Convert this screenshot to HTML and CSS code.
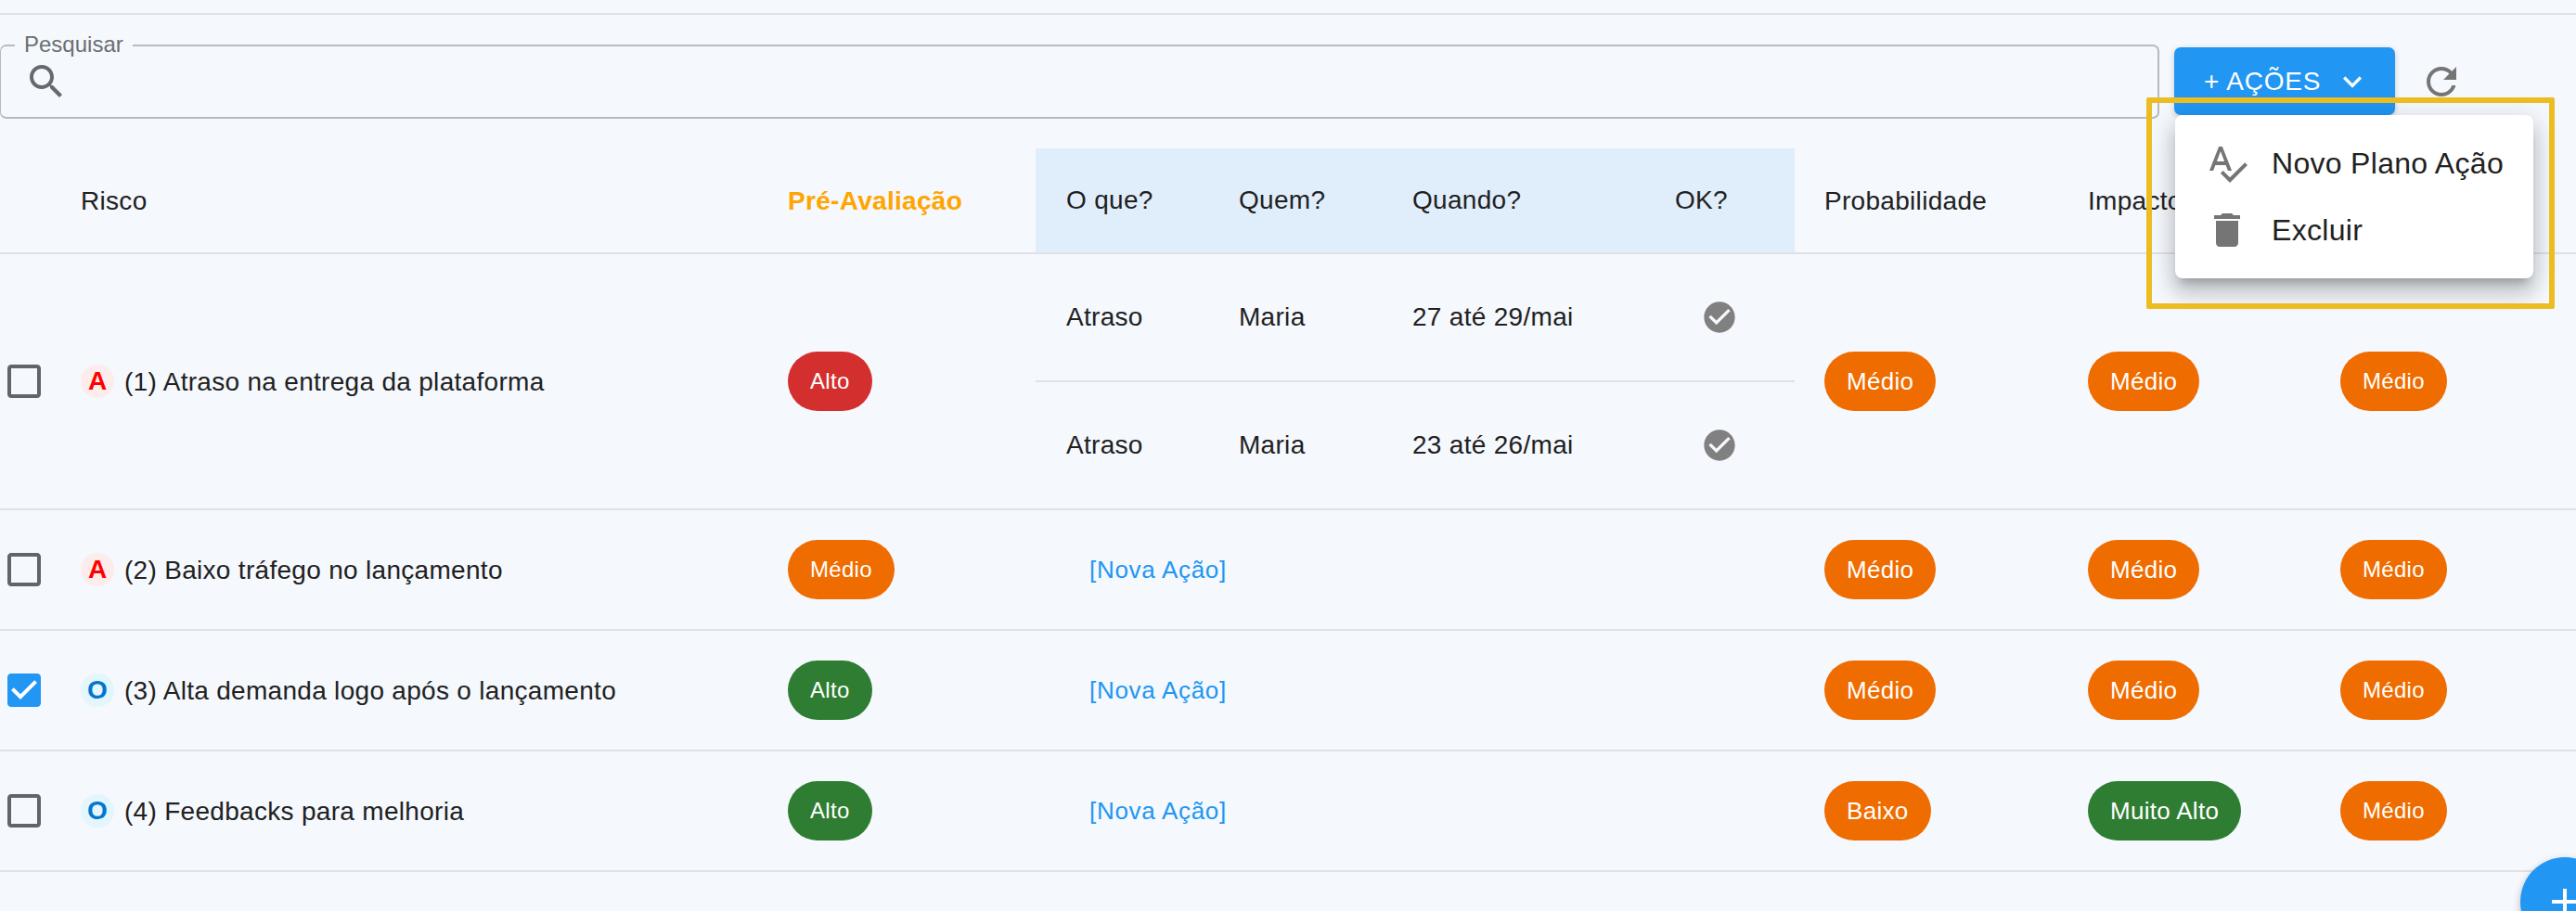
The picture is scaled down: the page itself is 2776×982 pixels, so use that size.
FILE: index.html
```html
<!DOCTYPE html>
<html lang="pt-BR">
<head>
    <meta charset="UTF-8">
    <title>Riscos</title>
    <link rel="stylesheet" href="styles.css">
</head>
<body>
    <div class="divider"></div>

    <div class="toolbar">
        <div class="search-box">
            <span class="search-label">Pesquisar</span>
            <svg class="icon icon-grey" viewBox="0 0 24 24"><path d="M15.5 14h-.79l-.28-.27C15.41 12.59 16 11.11 16 9.5 16 5.91 13.09 3 9.5 3S3 5.91 3 9.5 5.91 16 9.5 16c1.61 0 3.09-.59 4.23-1.57l.27.28v.79l5 4.99L20.49 19l-4.99-5zm-6 0C7.01 14 5 11.99 5 9.5S7.01 5 9.5 5 14 7.01 14 9.5 11.99 14 9.5 14z"/></svg>
        </div>
        <button class="actions-btn">
            <span>+ AÇÕES</span>
            <svg class="chevron" viewBox="0 0 24 24"><path d="M7.41 8.59L12 13.17l4.59-4.58L18 10l-6 6-6-6 1.41-1.41z"/></svg>
        </button>
        <svg class="icon icon-refresh" viewBox="0 0 24 24"><path d="M17.65 6.35C16.2 4.9 14.21 4 12 4c-4.42 0-7.99 3.58-7.99 8s3.57 8 7.99 8c3.73 0 6.84-2.55 7.73-6h-2.08c-.82 2.33-3.04 4-5.65 4-3.31 0-6-2.69-6-6s2.69-6 6-6c1.66 0 3.14.69 4.22 1.78L13 11h7V4l-2.35 2.35z"/></svg>
    </div>

    <div class="table">
        <div class="row head-row">
            <div></div>
            <div class="cell">Risco</div>
            <div class="cell pre-title">Pré-Avaliação</div>
            <div class="actions-head">
                <div>O que?</div>
                <div>Quem?</div>
                <div>Quando?</div>
                <div>OK?</div>
            </div>
            <div class="cell prob">Probabilidade</div>
            <div class="cell">Impacto</div>
            <div></div>
        </div>

        <div class="row row-tall">
            <div class="check-cell">
                <svg class="icon icon-box" viewBox="0 0 24 24"><path d="M19 5v14H5V5h14m0-2H5c-1.1 0-2 .9-2 2v14c0 1.1.9 2 2 2h14c1.1 0 2-.9 2-2V5c0-1.1-.9-2-2-2z"/></svg>
            </div>
            <div class="cell risk"><span class="avatar threat">A</span>(1) Atraso na entrega da plataforma</div>
            <div class="cell"><span class="pill small red">Alto</span></div>
            <div class="action-list">
                <div class="action">
                    <div>Atraso</div>
                    <div>Maria</div>
                    <div>27 até 29/mai</div>
                    <svg class="icon-ok" viewBox="0 0 24 24"><path d="M12 2C6.48 2 2 6.48 2 12s4.48 10 10 10 10-4.48 10-10S17.52 2 12 2zm-2 15l-5-5 1.41-1.41L10 14.17l7.59-7.59L19 8l-9 9z"/></svg>
                </div>
                <div class="action">
                    <div>Atraso</div>
                    <div>Maria</div>
                    <div>23 até 26/mai</div>
                    <svg class="icon-ok" viewBox="0 0 24 24"><path d="M12 2C6.48 2 2 6.48 2 12s4.48 10 10 10 10-4.48 10-10S17.52 2 12 2zm-2 15l-5-5 1.41-1.41L10 14.17l7.59-7.59L19 8l-9 9z"/></svg>
                </div>
            </div>
            <div class="cell prob"><span class="pill orange">Médio</span></div>
            <div class="cell"><span class="pill orange">Médio</span></div>
            <div class="cell"><span class="pill small orange">Médio</span></div>
        </div>

        <div class="row">
            <div class="check-cell">
                <svg class="icon icon-box" viewBox="0 0 24 24"><path d="M19 5v14H5V5h14m0-2H5c-1.1 0-2 .9-2 2v14c0 1.1.9 2 2 2h14c1.1 0 2-.9 2-2V5c0-1.1-.9-2-2-2z"/></svg>
            </div>
            <div class="cell risk"><span class="avatar threat">A</span>(2) Baixo tráfego no lançamento</div>
            <div class="cell"><span class="pill small orange">Médio</span></div>
            <div class="cell new-action">[Nova Ação]</div>
            <div class="cell prob"><span class="pill orange">Médio</span></div>
            <div class="cell"><span class="pill orange">Médio</span></div>
            <div class="cell"><span class="pill small orange">Médio</span></div>
        </div>

        <div class="row">
            <div class="check-cell">
                <svg class="icon icon-checked" viewBox="0 0 24 24"><path d="M5 4h14v16H5z" fill="#fff"/><path d="M19 3H5c-1.11 0-2 .9-2 2v14c0 1.1.89 2 2 2h14c1.1 0 2-.9 2-2V5c0-1.1-.9-2-2-2zm-9 14l-5-5 1.41-1.41L10 14.17l7.59-7.59L19 8l-9 9z"/></svg>
            </div>
            <div class="cell risk"><span class="avatar chance">O</span>(3) Alta demanda logo após o lançamento</div>
            <div class="cell"><span class="pill small green">Alto</span></div>
            <div class="cell new-action">[Nova Ação]</div>
            <div class="cell prob"><span class="pill orange">Médio</span></div>
            <div class="cell"><span class="pill orange">Médio</span></div>
            <div class="cell"><span class="pill small orange">Médio</span></div>
        </div>

        <div class="row">
            <div class="check-cell">
                <svg class="icon icon-box" viewBox="0 0 24 24"><path d="M19 5v14H5V5h14m0-2H5c-1.1 0-2 .9-2 2v14c0 1.1.9 2 2 2h14c1.1 0 2-.9 2-2V5c0-1.1-.9-2-2-2z"/></svg>
            </div>
            <div class="cell risk"><span class="avatar chance">O</span>(4) Feedbacks para melhoria</div>
            <div class="cell"><span class="pill small green">Alto</span></div>
            <div class="cell new-action">[Nova Ação]</div>
            <div class="cell prob"><span class="pill orange">Baixo</span></div>
            <div class="cell"><span class="pill green">Muito Alto</span></div>
            <div class="cell"><span class="pill small orange">Médio</span></div>
        </div>
    </div>

    <!-- menu aberto pelo botao + ACOES -->
    <div class="menu">
        <div class="menu-item">
            <svg class="icon icon-menu" viewBox="0 0 24 24"><path d="M12.45 16h2.09L9.43 3H7.57L2.46 16h2.09l1.12-3h5.64l1.14 3zm-6.02-5L8.5 5.48 10.57 11H6.43zm15.16.59l-8.09 8.09L9.83 16l-1.41 1.41 5.09 5.09L23 13l-1.41-1.41z"/></svg>
            <span>Novo Plano Ação</span>
        </div>
        <div class="menu-item">
            <svg class="icon icon-menu" viewBox="0 0 24 24"><path d="M6 19c0 1.1.9 2 2 2h8c1.1 0 2-.9 2-2V7H6v12zM19 4h-3.5l-1-1h-5l-1 1H5v2h14V4z"/></svg>
            <span>Excluir</span>
        </div>
    </div>
    <div class="highlight"></div>

    <div class="fab">
        <svg class="icon" viewBox="0 0 24 24"><path d="M19 13h-6v6h-2v-6H5v-2h6V5h2v6h6v2z" fill="#fff"/></svg>
    </div>
</body>
</html>
```

FILE: styles.css
```css
html, body {
    height: 982px;
    overflow: hidden;
}
body {
    font-family: 'Liberation Sans', Arial, sans-serif;
    font-size: 28px;
    letter-spacing: .01071em;
    color: #212121;
    background: #f5f8fd;
    margin: 0;
    padding-top: 14px;
    box-sizing: border-box;
}
.divider {
    height: 2px;
    background: #e0e1e6;
}
.icon {
    width: 48px;
    height: 48px;
    display: block;
    flex-shrink: 0;
}

/* barra de busca */
.toolbar {
    display: flex;
    align-items: flex-start;
    margin-top: 32px;
    height: 80px;
}
.search-box {
    position: relative;
    width: 2327px;
    height: 80px;
    box-sizing: border-box;
    border: 2px solid #b6bbc0;
    border-left-width: 1px;
    border-radius: 7px;
    padding: 14px 0 0 25px;
}
.search-box .icon {
    fill: #666a6e;
}
.search-label {
    position: absolute;
    left: 15px;
    top: -16px;
    padding: 0 10px;
    font-size: 24px;
    line-height: 28px;
    letter-spacing: 0;
    color: #6b6e72;
    background: #f5f8fd;
}
.actions-btn {
    display: flex;
    align-items: center;
    width: 238px;
    height: 73px;
    margin: 3px 0 0 16px;
    padding: 0 0 0 32px;
    border: none;
    border-radius: 7px;
    background: #2196f3;
    color: white;
    font-family: 'Liberation Sans', Arial, sans-serif;
    font-size: 28px;
    letter-spacing: .8px;
    box-shadow: 0 2px 6px rgba(0,0,0,0.2);
}
.chevron {
    width: 40px;
    height: 40px;
    margin-left: 14px;
    fill: white;
}
.icon-refresh {
    margin: 16px 0 0 26px;
    fill: #757575;
}

/* tabela */
.table {
    margin-top: 32px;
}
.row {
    display: grid;
    grid-template-columns: 87px 762px 267px 818px 316px 272px 1fr;
    height: 130px;
    box-sizing: border-box;
    border-bottom: 2px solid #e0e1e6;
}
.head-row {
    height: 114px;
}
.row-tall {
    height: 276px;
}
.cell {
    display: flex;
    align-items: center;
}
.prob {
    padding-left: 32px;
}
.head-row .cell, .risk {
    padding-top: 2px;
}
.check-cell {
    display: flex;
    align-items: center;
    padding-left: 2px;
}
.icon-box {
    fill: #616569;
}
.icon-checked {
    fill: #2196f3;
}
.pre-title {
    color: #ffa500;
    font-weight: bold;
}
.actions-head, .action {
    display: grid;
    grid-template-columns: 186px 187px 283px 1fr;
    align-items: center;
    padding-left: 33px;
    box-sizing: border-box;
}
.actions-head {
    background: #e0eefb;
}
.action {
    height: 136px;
}
.action:first-child {
    height: 138px;
    border-bottom: 2px solid #e0e1e6;
}
.icon-ok {
    width: 40px;
    height: 40px;
    margin-left: 28px;
    fill: #808080;
}
.new-action {
    padding-left: 58px;
    font-size: 26px;
    letter-spacing: .7px;
    color: #2196f3;
}

.avatar {
    width: 36px;
    height: 36px;
    margin: -2px 11px 0 0;
    border-radius: 50%;
    display: flex;
    align-items: center;
    justify-content: center;
    font-weight: bold;
    letter-spacing: 0;
    flex-shrink: 0;
}
.threat {
    color: #f00;
    background: #fdecec;
}
.chance {
    color: #0277cc;
    background: #e3f6fd;
}

.pill {
    display: inline-block;
    height: 64px;
    line-height: 64px;
    padding: 0 24px;
    border-radius: 32px;
    font-size: 26px;
    color: white;
}
.pill.small {
    font-size: 24px;
}
.orange { background: #ef6c00; }
.green { background: #2e7d32; }
.red { background: #d32f2f; }

/* menu suspenso */
.menu {
    position: absolute;
    left: 2344px;
    top: 124px;
    width: 386px;
    height: 176px;
    box-sizing: border-box;
    padding-top: 16px;
    background: white;
    border-radius: 8px;
    box-shadow: 0 10px 10px -6px rgba(0,0,0,.2), 0 16px 20px 2px rgba(0,0,0,.14), 0 6px 28px 4px rgba(0,0,0,.12);
    font-size: 32px;
}
.menu-item {
    display: flex;
    align-items: center;
    height: 72px;
    padding-left: 32px;
    gap: 24px;
}
.icon-menu {
    fill: #757575;
}
.highlight {
    position: absolute;
    left: 2313px;
    top: 105px;
    width: 440px;
    height: 228px;
    box-sizing: border-box;
    border: 6px solid #ecbc21;
    border-radius: 2px;
}
.fab {
    position: fixed;
    left: 2716px;
    top: 924px;
    width: 96px;
    height: 96px;
    display: flex;
    align-items: center;
    justify-content: center;
    border-radius: 50%;
    background: #2196f3;
    box-shadow: 0 3px 8px rgba(0,0,0,0.25);
}
```
